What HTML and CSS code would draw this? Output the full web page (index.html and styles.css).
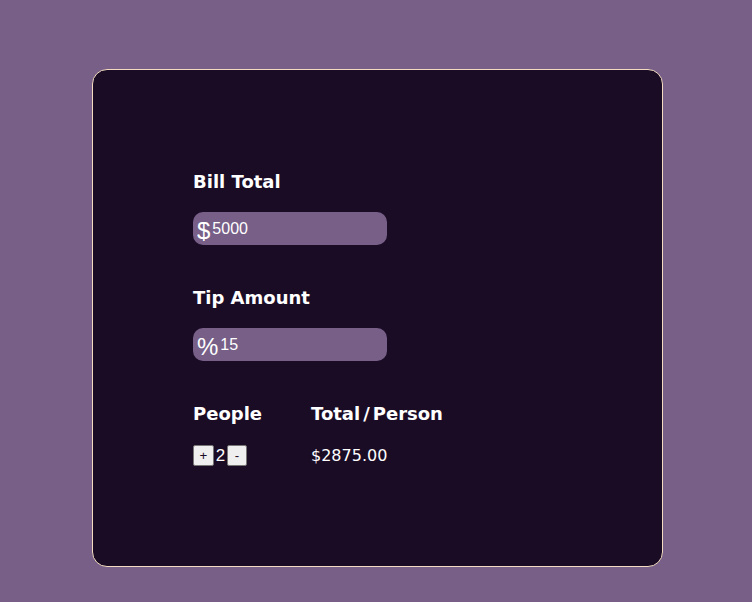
FILE: index.html
```html
<!DOCTYPE html>
<html>
<head>
<meta charset="utf-8">
<link rel="stylesheet" href="styles.css">
</head>
<body>
<div class="card">
  <div class="field">
    <label class="label" for="bill">Bill Total</label>
    <div class="input-wrap">
      <span class="prefix">$</span><input id="bill" class="input" type="text" value="5000">
    </div>
  </div>
  <div class="field">
    <label class="label" for="tip">Tip Amount</label>
    <div class="input-wrap">
      <span class="prefix">%</span><input id="tip" class="input" type="text" value="15" autofocus>
    </div>
  </div>
  <div class="row">
    <div class="col col-people">
      <div class="label">People</div>
      <div class="counter"><button class="btn btn-plus">+</button><span class="count">2</span><button class="btn">-</button></div>
    </div>
    <div class="col">
      <div class="label">Total<span class="slash">/</span>Person</div>
      <div class="total">$2875.00</div>
    </div>
  </div>
</div>
</body>
</html>
```
FILE: styles.css
```css
html, body {
  margin: 0;
  padding: 0;
}
body {
  background: #775f88;
  height: 602px;
  padding-top: 69px;
  box-sizing: border-box;
}
.card {
  margin-left: 92px;
  width: 571px;
  height: 498px;
  box-sizing: border-box;
  background: #1b0c26;
  border: 1px solid #f3dcc0;
  border-radius: 15px;
  padding: 101px 0 0 100px;
  display: flex;
  flex-direction: column;
  gap: 42px;
}
.field {
  display: flex;
  flex-direction: column;
  gap: 20px;
}
.label {
  font-family: "DejaVu Sans", sans-serif;
  font-weight: bold;
  font-size: 18px;
  line-height: 21px;
  color: #ffffff;
}
.slash {
  padding: 0 3px;
}
.input-wrap {
  width: 194px;
  height: 33px;
  background: #775f88;
  border-radius: 10px;
  display: flex;
  align-items: center;
  padding-left: 4px;
  box-sizing: border-box;
}
.prefix {
  font-family: "Liberation Sans", sans-serif;
  font-size: 24px;
  line-height: 24px;
  color: #ffffff;
  margin-top: 4px;
}
.input {
  background: transparent;
  border: none;
  outline: none;
  color: #ffffff;
  font-family: "Liberation Sans", sans-serif;
  font-size: 16px;
  padding: 0 0 0 2px;
  margin: 0;
  width: 150px;
  caret-color: #ffffff;
}
.row {
  display: flex;
}
.col {
  display: flex;
  flex-direction: column;
  gap: 21px;
}
.col-people {
  width: 118px;
}
.counter {
  display: flex;
  align-items: center;
  height: 21px;
}
.btn {
  font-family: "Liberation Sans", sans-serif;
  font-size: 13.33px;
  background: #efefef;
  border: 1px solid #767676;
  border-radius: 2px;
  color: #1b0c26;
  padding: 0;
  width: 20px;
  height: 21px;
  margin: 0;
}
.btn-plus {
  width: 21px;
}
.count {
  font-family: "Liberation Sans", sans-serif;
  font-size: 17px;
  color: #ffffff;
  width: 13px;
  text-align: center;
}
.total {
  font-family: "DejaVu Sans", sans-serif;
  font-size: 16px;
  color: #ffffff;
  line-height: 21px;
}
```
